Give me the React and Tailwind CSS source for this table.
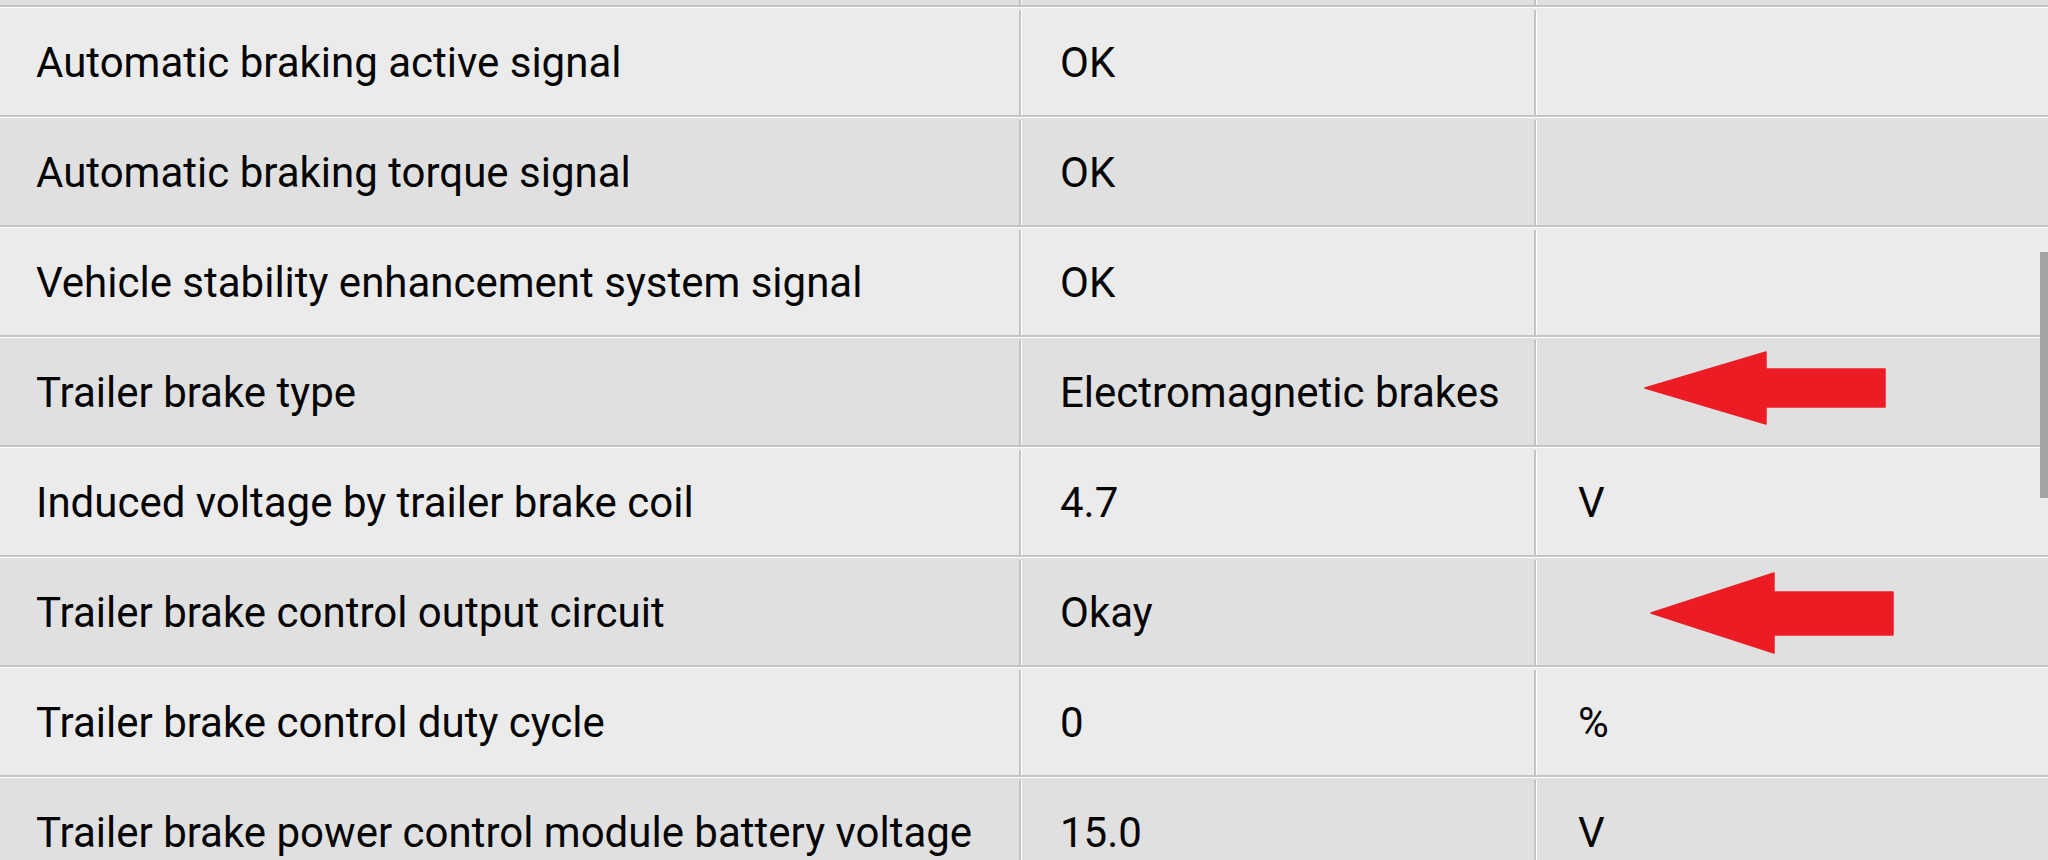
import React from "react";

const rows = [
  ["Automatic braking active signal", "OK", ""],
  ["Automatic braking torque signal", "OK", ""],
  ["Vehicle stability enhancement system signal", "OK", ""],
  ["Trailer brake type", "Electromagnetic brakes", ""],
  ["Induced voltage by trailer brake coil", "4.7", "V"],
  ["Trailer brake control output circuit", "Okay", ""],
  ["Trailer brake control duty cycle", "0", "%"],
  ["Trailer brake power control module battery voltage", "15.0", "V"],
];

function Row({ cells, dark, partial }) {
  const bg = dark ? "bg-[#e0e0e0]" : "bg-[#ebebeb]";
  return (
    <div
      className={`flex ${bg} ${partial ? "h-[7px] border-b-2 border-[#c4c4c4]" : "h-[110px] pt-[2px] border-t border-t-white border-b-2 border-b-[#c4c4c4]"} shrink-0`}
    >
      <div className="w-[1021px] shrink-0 flex items-center pl-[36px] border-r-2 border-[#c4c4c4]">
        {cells && <span>{cells[0]}</span>}
      </div>
      <div className="w-[515px] shrink-0 flex items-center pl-[38px] border-l border-l-white border-r-2 border-r-[#c4c4c4]">
        {cells && <span>{cells[1]}</span>}
      </div>
      <div className="flex-1 flex items-center pl-[41px] border-l border-l-white">
        {cells && <span>{cells[2]}</span>}
      </div>
    </div>
  );
}

export default function App() {
  return (
    <div
      className="relative w-[2048px] h-[860px] overflow-hidden bg-[#ebebeb] text-[42px] leading-none text-[#050505] flex flex-col"
      style={{ fontFamily: "Roboto, 'Noto Sans', sans-serif" }}
    >
      <Row partial dark />
      {rows.map((r, i) => (
        <Row key={i} cells={r} dark={i % 2 === 1} />
      ))}

      <svg
        className="absolute left-[1640px] top-[348px]"
        width="250"
        height="80"
        viewBox="0 0 250 80"
      >
        <polygon
          points="5,40 126,4 126,21 245,21 245,59 126,59 126,76"
          fill="#ed1c24"
          stroke="#ed1c24"
          strokeWidth="1.5"
          strokeLinejoin="round"
        />
      </svg>
      <svg
        className="absolute left-[1645px] top-[568px]"
        width="255"
        height="90"
        viewBox="0 0 255 90"
      >
        <polygon
          points="6,45 129,5 129,24 248,24 248,67 129,67 129,85"
          fill="#ed1c24"
          stroke="#ed1c24"
          strokeWidth="1.5"
          strokeLinejoin="round"
        />
      </svg>

      <div className="absolute left-[2040px] top-[252px] w-[8px] h-[246px] bg-[#a3a3a3]" />
    </div>
  );
}
